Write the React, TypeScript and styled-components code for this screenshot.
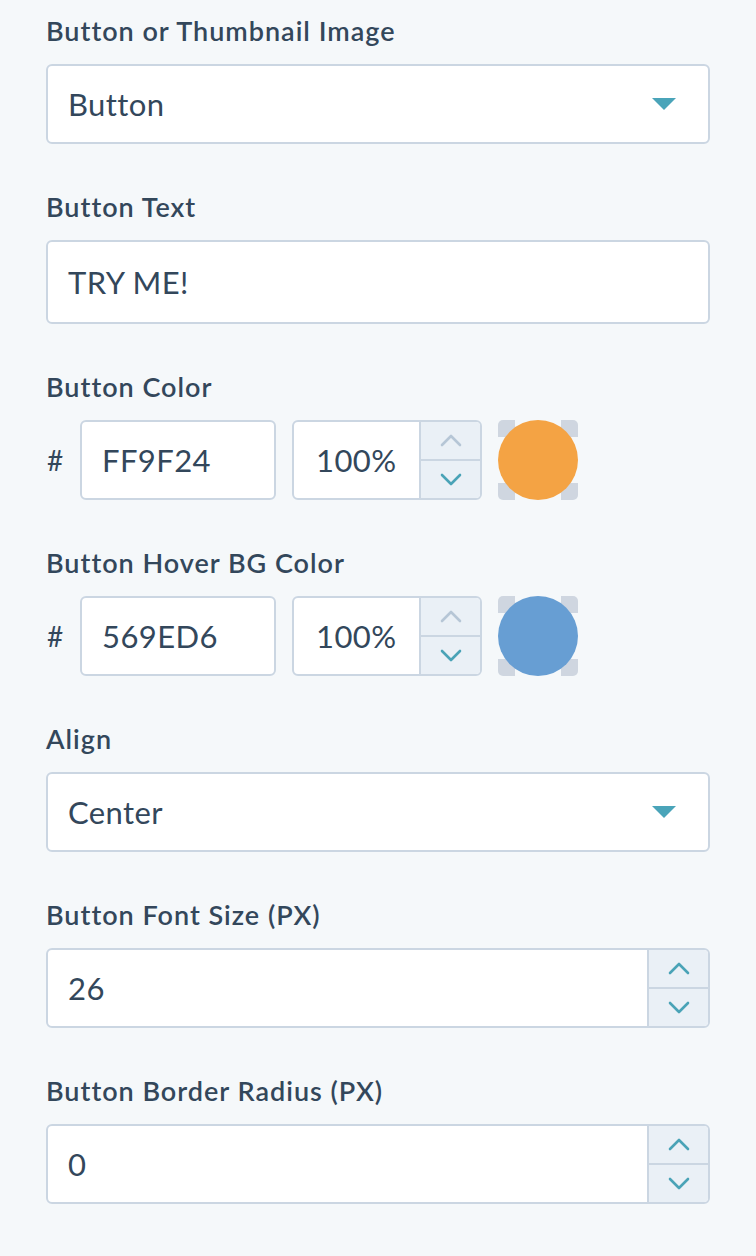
import React from "react";
import styled, { createGlobalStyle } from "styled-components";

const Global = createGlobalStyle`
  html, body { margin: 0; padding: 0; background: #f5f8fa; }
  body { font-family: Lato, "Open Sans", sans-serif; color: #33475b; }
  * { box-sizing: border-box; }
`;

const Panel = styled.div`
  display: flex;
  flex-direction: column;
  gap: 48px;
  padding: 16px 46px 40px 46px;
  width: 756px;
`;

const Field = styled.div`
  display: flex;
  flex-direction: column;
  gap: 18px;
`;

const Label = styled.div`
  font-size: 27px;
  font-weight: 600;
  line-height: 30px;
  height: 30px;
  color: #33475b;
  letter-spacing: 1px;
`;

const Box = styled.div<{ $h?: number }>`
  display: flex;
  align-items: stretch;
  height: ${(p) => p.$h ?? 80}px;
  background: #fff;
  border: 2px solid #cbd6e2;
  border-radius: 6px;
  overflow: hidden;
`;

const Value = styled.div`
  flex: 1;
  display: flex;
  align-items: center;
  padding-left: 20px;
  font-size: 31px;
  color: #33475b;
  letter-spacing: 0.4px;
`;

const Caret = styled.div`
  display: flex;
  align-items: center;
  padding-right: 32px;
`;

const Stepper = styled.div`
  width: 61px;
  display: flex;
  flex-direction: column;
  background: #eaf0f6;
  border-left: 2px solid #cbd6e2;
`;

const StepBtn = styled.div<{ $bottom?: boolean }>`
  flex: 1;
  display: flex;
  align-items: center;
  justify-content: center;
  ${(p) => (p.$bottom ? "border-top: 2px solid #cbd6e2;" : "")}
`;

const ColorRow = styled.div`
  display: flex;
  align-items: center;
  height: 80px;
`;

const Hash = styled.div`
  width: 34px;
  font-size: 28px;
  color: #33475b;
  padding-left: 1px;
`;

const HexBox = styled(Box)`
  width: 196px;
`;

const PctBox = styled(Box)`
  width: 190px;
  margin-left: 16px;
`;

const PctValue = styled(Value)`
  padding-left: 22px;
`;

const Swatch = styled.div`
  position: relative;
  width: 80px;
  height: 80px;
  margin-left: 16px;
`;

const Tab = styled.div<{ $v: "top" | "bottom"; $h: "left" | "right" }>`
  position: absolute;
  ${(p) => p.$v}: 0;
  ${(p) => p.$h}: 0;
  width: 17px;
  height: 17px;
  background: #cfd6e0;
  border-${(p) => p.$v}-${(p) => p.$h}-radius: 5px;
`;

const Dot = styled.div<{ $c: string }>`
  position: absolute;
  inset: 0;
  border-radius: 50%;
  background: ${(p) => p.$c};
`;

const Chevron = ({ up, muted }: { up?: boolean; muted?: boolean }) => (
  <svg width="22" height="13" viewBox="0 0 22 13">
    <polyline
      points={up ? "2,11 11,2 20,11" : "2,2 11,11 20,2"}
      fill="none"
      stroke={muted ? "#b6c6d6" : "#4aa3b7"}
      strokeWidth="2.6"
      strokeLinecap="round"
      strokeLinejoin="round"
    />
  </svg>
);

const Triangle = () => (
  <svg width="24" height="12" viewBox="0 0 24 12">
    <polygon points="0,0 24,0 12,12" fill="#4aa4b9" />
  </svg>
);

const Select = ({ value }: { value: string }) => (
  <Box>
    <Value>{value}</Value>
    <Caret>
      <Triangle />
    </Caret>
  </Box>
);

const NumberInput = ({ value }: { value: string }) => (
  <Box>
    <Value>{value}</Value>
    <Stepper>
      <StepBtn>
        <Chevron up />
      </StepBtn>
      <StepBtn $bottom>
        <Chevron />
      </StepBtn>
    </Stepper>
  </Box>
);

const ColorPicker = ({ hex, color }: { hex: string; color: string }) => (
  <ColorRow>
    <Hash>#</Hash>
    <HexBox>
      <Value>{hex}</Value>
    </HexBox>
    <PctBox>
      <PctValue>100%</PctValue>
      <Stepper>
        <StepBtn>
          <Chevron up muted />
        </StepBtn>
        <StepBtn $bottom>
          <Chevron />
        </StepBtn>
      </Stepper>
    </PctBox>
    <Swatch>
      <Tab $v="top" $h="left" />
      <Tab $v="top" $h="right" />
      <Tab $v="bottom" $h="left" />
      <Tab $v="bottom" $h="right" />
      <Dot $c={color} />
    </Swatch>
  </ColorRow>
);

export default function App() {
  return (
    <>
      <Global />
      <Panel>
        <Field>
          <Label>Button or Thumbnail Image</Label>
          <Select value="Button" />
        </Field>
        <Field>
          <Label>Button Text</Label>
          <Box $h={84}>
            <Value>TRY ME!</Value>
          </Box>
        </Field>
        <Field>
          <Label>Button Color</Label>
          <ColorPicker hex="FF9F24" color="#f4a344" />
        </Field>
        <Field>
          <Label>Button Hover BG Color</Label>
          <ColorPicker hex="569ED6" color="#679ed3" />
        </Field>
        <Field>
          <Label>Align</Label>
          <Select value="Center" />
        </Field>
        <Field>
          <Label>Button Font Size (PX)</Label>
          <NumberInput value="26" />
        </Field>
        <Field>
          <Label>Button Border Radius (PX)</Label>
          <NumberInput value="0" />
        </Field>
      </Panel>
    </>
  );
}
